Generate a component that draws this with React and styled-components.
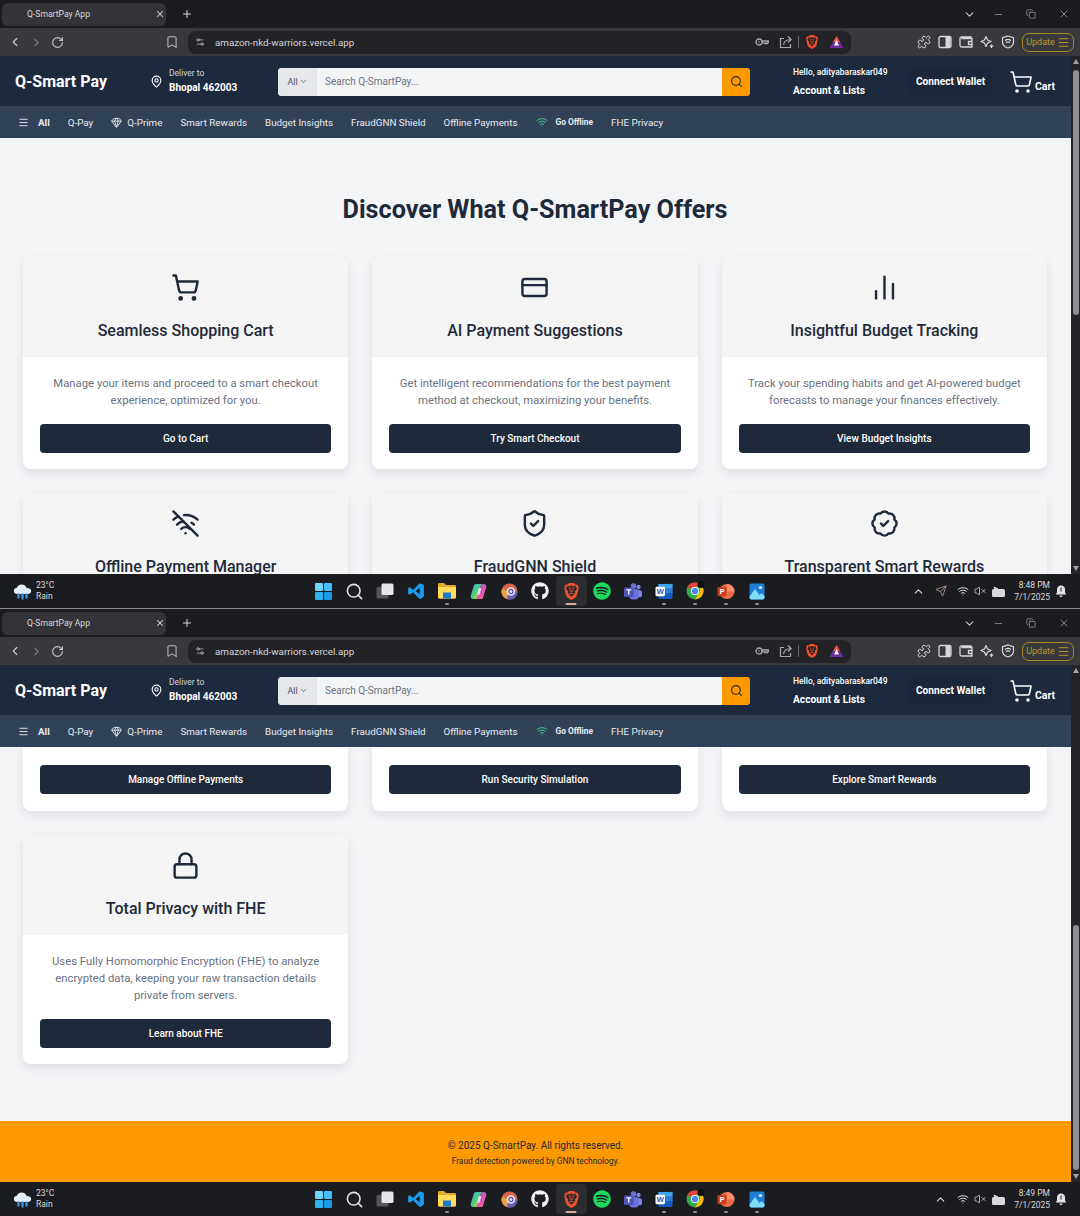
import React from 'react'
import styled, { createGlobalStyle } from 'styled-components'
import {
  BadgeCheck, Bookmark, ChartNoAxesColumn, ChevronDown, ChevronLeft, ChevronRight, ChevronUp,
  Copy, CreditCard, Gem, Lock, MapPin, Menu, Minus, Plus, Puzzle, RotateCw,
  Search, Send, Settings2, ShieldCheck, ShoppingCart, VolumeX,
  Wifi, WifiOff, X
} from 'lucide-react'
import { FaGithub, FaSpotify } from 'react-icons/fa'
import { SiBrave } from 'react-icons/si'

const GlobalStyle = createGlobalStyle`
  html, body { margin: 0; padding: 0; background: #1b1c1f; }
  body { font-family: Roboto, "Liberation Sans", sans-serif; }
  * { box-sizing: border-box; }
`

const Screen = styled.div`
  width: 1080px;
  height: 1216px;
  overflow: hidden;
`

const Window = styled.section`
  height: ${p => p.$height}px;
  display: flex;
  flex-direction: column;
`

/* browser chrome */
const TabStrip = styled.div`
  height: 28px;
  flex: none;
  display: flex;
  align-items: center;
  background: #1b1b20;
  color: #d8d8da;
  padding: 0 5px 0 2px;
`

const Tab = styled.div`
  width: 164px;
  height: 23px;
  background: #343438;
  border-radius: 6px;
  display: flex;
  align-items: center;
  justify-content: space-between;
  padding: 0 1px 0 25px;
  font-size: 8.6px;
  color: #d9d9dc;
`

const TabClose = styled.span`
  display: flex;
  width: 10px;
`

const NewTab = styled.span`
  display: flex;
  margin-left: 15px;
`

const WindowControls = styled.div`
  margin-left: auto;
  display: flex;
  align-items: center;
  gap: 22px;
  padding-right: 5px;
  color: #c9c9cc;
  & > :first-child { margin-right: -5px; }
`

const Toolbar = styled.div`
  height: 28px;
  flex: none;
  display: flex;
  align-items: center;
  background: #39393d;
  color: #c9c9cc;
  padding: 0 6px 0 8px;
`

const NavButtons = styled.div`
  width: 157px;
  display: flex;
  align-items: center;
  gap: 8px;
`

const Faded = styled.span`
  display: flex;
  opacity: 0.45;
`

const BookmarkSlot = styled.div`
  width: 23px;
  display: flex;
`

const UrlBar = styled.div`
  width: 663px;
  height: 23px;
  background: #232327;
  border-radius: 8px;
  display: flex;
  align-items: center;
  padding: 0 7px;
  font-size: 9.8px;
  color: #d5d5d8;
`

const UrlText = styled.span`
  margin-left: 10px;
`

const UrlActions = styled.div`
  margin-left: auto;
  display: flex;
  align-items: center;
  gap: 10px;
  color: #a9a9ad;
`

const Separator = styled.span`
  width: 1px;
  height: 12px;
  background: #67676b;
  margin: 0 -4px 0 -5px;
`

const ExtensionIcons = styled.div`
  margin-left: 66px;
  display: flex;
  align-items: center;
  gap: 7px;
  color: #d8d8da;
`

const UpdateButton = styled.div`
  width: 52px;
  height: 19px;
  margin-left: 7px;
  border: 1px solid #a8892a;
  border-radius: 7px;
  display: flex;
  align-items: center;
  justify-content: center;
  gap: 2px;
  font-size: 9px;
  color: #b8962a;
`

/* site */
const PageArea = styled.div`
  flex: 1;
  min-height: 0;
  display: flex;
`

const PageColumn = styled.div`
  flex: 1;
  min-width: 0;
  display: flex;
  flex-direction: column;
`

const Scrollbar = styled.div`
  width: 9px;
  flex: none;
  background: #242428;
  display: flex;
  flex-direction: column;
  align-items: center;
  padding: 3px 0;
`

const Arrow = styled.span`
  width: 0;
  height: 0;
  border-left: 3.5px solid transparent;
  border-right: 3.5px solid transparent;
  ${p => p.$down ? 'border-top: 5px solid #a3a3a6; margin-top: auto;' : 'border-bottom: 5px solid #a3a3a6;'}
`

const Thumb = styled.span`
  width: 6px;
  height: 245px;
  border-radius: 3px;
  background: #8e8e91;
  margin-top: ${p => p.$top}px;
`

const Header = styled.header`
  height: 50px;
  flex: none;
  display: flex;
  align-items: center;
  background: #1d293d;
  color: #fff;
  padding: 1px 0 0 15px;
`

const Logo = styled.div`
  width: 135px;
  flex: none;
  font-size: 16px;
  font-weight: 700;
`

const Deliver = styled.div`
  width: 128px;
  flex: none;
  display: flex;
  align-items: center;
  gap: 6px;
`

const SmallLabel = styled.div`
  font-size: 8.5px;
  line-height: 11px;
  color: #d1d5db;
`

const StrongLabel = styled.div`
  font-size: 10px;
  line-height: 15px;
  font-weight: 700;
  margin-top: 1px;
`

const SearchBox = styled.div`
  width: 472px;
  height: 28px;
  flex: none;
  display: flex;
  border-radius: 4px;
  overflow: hidden;
  background: #f3f4f6;
`

const SearchScope = styled.div`
  width: 39px;
  background: #e5e7eb;
  color: #4b5563;
  display: flex;
  align-items: center;
  justify-content: center;
  gap: 1px;
  font-size: 9px;
`

const SearchText = styled.div`
  flex: 1;
  display: flex;
  align-items: center;
  padding-left: 8px;
  font-size: 10px;
  color: #6b7280;
`

const SearchButton = styled.div`
  width: 28px;
  background: #ff9900;
  color: #1f2937;
  display: flex;
  align-items: center;
  justify-content: center;
`

const Account = styled.div`
  width: 122px;
  flex: none;
  margin-left: 43px;
`

const Hello = styled.div`
  font-size: 8.5px;
  line-height: 12px;
  font-weight: 500;
  margin-bottom: 6px;
`

const AccountLabel = styled.div`
  font-size: 10.2px;
  line-height: 13px;
  font-weight: 700;
`

const WalletButton = styled.div`
  width: 83px;
  flex: none;
  margin-left: -6px;
  height: 27px;
  border-radius: 4px;
  background: #1b2638;
  display: flex;
  align-items: center;
  justify-content: center;
  font-size: 10.2px;
  font-weight: 700;
`

const CartLink = styled.div`
  margin-left: 17px;
  display: flex;
  align-items: flex-end;
  gap: 2px;
  font-size: 10.5px;
  font-weight: 700;
  line-height: 14px;
`

const Nav = styled.nav`
  height: 32px;
  flex: none;
  display: flex;
  align-items: center;
  gap: 18px;
  background: #314158;
  color: #e8ebef;
  padding-left: 18px;
  font-size: 9.8px;
  white-space: nowrap;
`

const NavItem = styled.span`
  display: flex;
  align-items: center;
  gap: ${p => p.$gap || 0}px;
  font-weight: ${p => p.$bold ? 700 : 400};
  font-size: ${p => p.$small ? '8.4px' : 'inherit'};
`

const Viewport = styled.div`
  flex: 1;
  min-height: 0;
  overflow: hidden;
  background: #f3f4f6;
`

const Main = styled.main`
  padding: ${p => p.$top}px 24px 57px 23px;
`

const Title = styled.h1`
  margin: 0 0 29px;
  text-align: center;
  font-size: 25.2px;
  line-height: 36px;
  font-weight: 700;
  color: #1e2939;
`

const CardGrid = styled.div`
  display: grid;
  grid-template-columns: repeat(3, 1fr);
  gap: 24px;
`

const Card = styled.article`
  background: #fff;
  border-radius: ${p => p.$continued ? '0 0 8px 8px' : '8px'};
  overflow: hidden;
  box-shadow: 0 4px 10px rgba(30, 41, 59, 0.1);
  display: flex;
  flex-direction: column;
`

const CardHead = styled.div`
  height: 100px;
  flex: none;
  background: #f4f4f5;
  display: flex;
  flex-direction: column;
  align-items: center;
  padding-top: 16px;
  color: #1e2939;
`

const CardTitle = styled.h2`
  margin: 17px 0 0;
  font-size: 16px;
  line-height: 24px;
  font-weight: 500;
`

const CardBody = styled.div`
  flex: 1;
  display: flex;
  flex-direction: column;
  padding: 18px 17px 16px;
`

const CardTail = styled.div`
  display: flex;
  flex-direction: column;
  padding: 18px 17px 17px;
`

const CardText = styled.p`
  margin: 0 0 15px;
  flex: 1;
  text-align: center;
  font-size: 11.3px;
  line-height: 17px;
  color: #6a7282;
`

const CardButton = styled.button`
  height: 29px;
  border: 0;
  border-radius: 4px;
  background: #1e2939;
  color: #fff;
  font: 500 10px Roboto, sans-serif;
`

const Footer = styled.footer`
  height: 61px;
  background: #ff9900;
  color: #1e2939;
  text-align: center;
  padding-top: 17px;
`

const FooterLine = styled.div`
  font-size: 10px;
  line-height: 15px;
`

const FooterNote = styled.div`
  font-size: 8.4px;
  line-height: 13px;
  margin-top: 2px;
`

/* taskbar */
const Taskbar = styled.div`
  height: ${p => p.$divider ? 35 : 34}px;
  flex: none;
  display: grid;
  grid-template-columns: 1fr auto 1fr;
  align-items: center;
  background: #1b1c1f;
  border-bottom: ${p => p.$divider ? '1px solid #8b8b8e' : '0'};
  color: #e4e4e6;
`

const Weather = styled.div`
  display: flex;
  align-items: center;
  gap: 4px;
  padding-left: 13px;
`

const WeatherText = styled.div`
  font-size: 8.5px;
  line-height: 11px;
  color: #d8d8da;
`

const AppRow = styled.div`
  display: flex;
`

const AppSlot = styled.div`
  position: relative;
  width: 31px;
  height: 30px;
  display: flex;
  align-items: center;
  justify-content: center;
  border-radius: 4px;
  background: ${p => p.$active ? '#2b2c30' : 'transparent'};
  &::after {
    content: '';
    display: ${p => p.$running || p.$active ? 'block' : 'none'};
    position: absolute;
    bottom: 1px;
    left: 50%;
    transform: translateX(-50%);
    width: ${p => p.$active ? 11 : 4}px;
    height: 2px;
    border-radius: 1px;
    background: ${p => p.$active ? '#d9a9a0' : '#8f8f92'};
  }
`

const Tray = styled.div`
  display: flex;
  align-items: center;
  justify-content: flex-end;
  gap: 10px;
  padding-right: 13px;
  color: #d8d8da;
`

const SendIcon = styled.span`
  display: flex;
  color: #c7a79f;
`

const StatusIcons = styled.div`
  display: flex;
  align-items: center;
  gap: 5px;
`

const Clock = styled.div`
  width: 36px;
  margin: 0 -5px 0 -2px;
  text-align: right;
  font-size: 8.5px;
  line-height: 12px;
`

const features = [
  { icon: ShoppingCart, title: 'Seamless Shopping Cart', text: 'Manage your items and proceed to a smart checkout experience, optimized for you.', cta: 'Go to Cart' },
  { icon: CreditCard, title: 'AI Payment Suggestions', text: 'Get intelligent recommendations for the best payment method at checkout, maximizing your benefits.', cta: 'Try Smart Checkout' },
  { icon: ChartNoAxesColumn, title: 'Insightful Budget Tracking', text: 'Track your spending habits and get AI-powered budget forecasts to manage your finances effectively.', cta: 'View Budget Insights' }
]

const offlineRow = [
  { icon: WifiOff, title: 'Offline Payment Manager', cta: 'Manage Offline Payments' },
  { icon: ShieldCheck, title: 'FraudGNN Shield', cta: 'Run Security Simulation' },
  { icon: BadgeCheck, title: 'Transparent Smart Rewards', cta: 'Explore Smart Rewards' }
]

const privacy = { icon: Lock, title: 'Total Privacy with FHE', text: 'Uses Fully Homomorphic Encryption (FHE) to analyze encrypted data, keeping your raw transaction details private from servers.', cta: 'Learn about FHE' }

const navLinks = ['Smart Rewards', 'Budget Insights', 'FraudGNN Shield', 'Offline Payments']

const WindowsLogo = () => (
  <svg width="17" height="17" viewBox="0 0 18 18">
    <rect x="0" y="0" width="8.5" height="8.5" rx="1" fill="#6fd3fb" />
    <rect x="9.5" y="0" width="8.5" height="8.5" rx="1" fill="#45c0f7" />
    <rect x="0" y="9.5" width="8.5" height="8.5" rx="1" fill="#2fb2f2" />
    <rect x="9.5" y="9.5" width="8.5" height="8.5" rx="1" fill="#1a9be6" />
  </svg>
)

const TaskView = () => (
  <svg width="18" height="16" viewBox="0 0 18 16">
    <rect x="0.5" y="4" width="12" height="11.500" rx="1.500" fill="#55565a" />
    <rect x="5.500" y="0.500" width="12" height="11.500" rx="1.500" fill="#e6e6e8" />
  </svg>
)

const VsCode = () => (
  <svg width="18" height="18" viewBox="0 0 24 24">
    <path fillRule="evenodd" fill="#1b9cf0" d="M17 1.500 8 10.500 3.500 7 1.500 8v8l2 1L8 13.500l9 9 5.500-2.500V4zM17 7.500 11.500 12l5.500 4.500z" />
  </svg>
)

const Folder = () => (
  <svg width="18" height="16" viewBox="0 0 18 16">
    <path fill="#e3a928" d="M0 1.500C0 .7.700 0 1.500 0H6l2 2h8.500c.8 0 1.500.7 1.500 1.500V14c0 .8-.7 1.500-1.500 1.500h-15C.7 15.500 0 14.800 0 14z" />
    <path fill="#ffdb5c" d="M0 4h18v10c0 .8-.7 1.500-1.500 1.500h-15C.7 15.500 0 14.800 0 14z" />
    <rect x="5" y="9.500" width="8" height="6" fill="#1a78c9" />
  </svg>
)

const Copilot = () => (
  <svg width="17" height="17" viewBox="0 0 18 18">
    <defs>
      <linearGradient id="copilotA" x1="0" y1="0" x2="1" y2="1">
        <stop offset="0" stopColor="#38a8f4" />
        <stop offset="0.5" stopColor="#4fd07a" />
        <stop offset="1" stopColor="#f7c43c" />
      </linearGradient>
      <linearGradient id="copilotB" x1="0" y1="0" x2="1" y2="1">
        <stop offset="0" stopColor="#7b5cf0" />
        <stop offset="0.6" stopColor="#e957a8" />
        <stop offset="1" stopColor="#f5803c" />
      </linearGradient>
    </defs>
    <path fill="url(#copilotA)" d="M6 1h6L8 17H3.500C1.300 17 .3 15.300.9 13.300L4 3C4.300 1.800 5 1 6 1z" />
    <path fill="url(#copilotB)" d="M12 1h2.500c2.200 0 3.200 1.700 2.600 3.700L14 15c-.3 1.200-1 2-2 2H7z" />
    <path fill="#eef2ff" d="M9.500 5.500h2.500l-2 7H7.500z" opacity="0.85" />
  </svg>
)

const ChromeDev = () => (
  <svg width="17" height="17" viewBox="0 0 18 18">
    <circle cx="9" cy="9" r="8.500" fill="#d9674f" />
    <path fill="#5b5fb8" d="M9 9 17.500 9A8.500 8.500 0 0 1 6 17z" />
    <path fill="#e9a04a" d="M9 9 6 17A8.500 8.500 0 0 1 1 6z" />
    <circle cx="10.500" cy="9" r="4.500" fill="#e8e3f5" />
    <circle cx="10.500" cy="9" r="2.200" fill="none" stroke="#5a4a9a" strokeWidth="1.200" />
  </svg>
)

const Teams = () => (
  <svg width="18" height="17" viewBox="0 0 18 17">
    <circle cx="14.500" cy="4" r="2.200" fill="#7b83eb" />
    <circle cx="9.500" cy="3" r="2.800" fill="#6a72d8" />
    <rect x="11" y="7" width="7" height="7.500" rx="3" fill="#7b83eb" />
    <rect x="5.500" y="6" width="9" height="10.500" rx="3" fill="#6a72d8" />
    <rect x="0" y="4.500" width="9.500" height="9.500" rx="1.200" fill="#4b53bc" />
    <path d="M2.300 6.800h5M4.800 6.800v5" stroke="#fff" strokeWidth="1.300" fill="none" />
  </svg>
)

const Word = () => (
  <svg width="18" height="17" viewBox="0 0 18 18">
    <rect x="3" y="1" width="15" height="16" rx="1.500" fill="#185abd" />
    <rect x="3" y="1" width="15" height="5" fill="#41a5ee" />
    <rect x="3" y="6" width="15" height="5" fill="#2b7cd3" />
    <rect x="0" y="4" width="10" height="10" rx="1.200" fill="#fff" />
    <text x="5" y="12" textAnchor="middle" fontSize="8" fontWeight="700" fill="#185abd" fontFamily="Liberation Sans">W</text>
  </svg>
)

const Chrome = () => (
  <svg width="20" height="20" viewBox="0 0 20 20">
    <circle cx="10" cy="10" r="8.500" fill="#34a853" />
    <path fill="#ea4335" d="M10 1.500a8.500 8.500 0 0 1 7.400 4.300H10A4.300 4.300 0 0 0 6 8.500L2.600 5.800A8.500 8.500 0 0 1 10 1.500z" />
    <path fill="#fbbc05" d="M17.400 5.800A8.500 8.500 0 0 1 10 18.500l3.700-6.300a4.300 4.300 0 0 0 0-6.400z" />
    <circle cx="10" cy="10" r="4" fill="#fff" />
    <circle cx="10" cy="10" r="3.100" fill="#4285f4" />
    <circle cx="16" cy="3.500" r="3.500" fill="#0b0b0c" />
  </svg>
)

const PowerPoint = () => (
  <svg width="18" height="17" viewBox="0 0 18 18">
    <circle cx="10" cy="9" r="8" fill="#ed6c47" />
    <path fill="#ff8f6b" d="M10 1a8 8 0 0 1 8 8h-8z" />
    <rect x="0" y="4.500" width="9.500" height="9.500" rx="1.200" fill="#c43e1c" />
    <text x="4.800" y="12" textAnchor="middle" fontSize="7.500" fontWeight="700" fill="#fff" fontFamily="Liberation Sans">P</text>
  </svg>
)

const Photos = () => (
  <svg width="16" height="17" viewBox="0 0 16 17">
    <rect x="0.500" y="0.500" width="15" height="16" rx="2" fill="#1c7fd8" />
    <circle cx="11.500" cy="4.500" r="1.600" fill="#e9f4fd" />
    <path fill="#7fdcfb" d="M.5 13.500 6 6l4.500 6 2-2 3 3v1.500a2 2 0 0 1-2 2h-11a2 2 0 0 1-2-2z" />
  </svg>
)

const RainCloud = () => (
  <svg width="19" height="19" viewBox="0 0 19 19">
    <path fill="#e4eef8" d="M4.500 12C2.200 12 .8 10.600.8 8.900c0-1.700 1.300-3 3-3.100C4.400 3.700 6.300 2.400 8.600 2.400c2.500 0 4.500 1.600 5 3.700 2.500-.1 4.600 1.100 4.600 3 0 1.700-1.400 2.900-3.300 2.900z" />
    <path stroke="#3f8fe0" strokeWidth="2.400" strokeLinecap="round" d="M5.500 12.500v3M9.500 12.500v4M13.500 12.500v3" />
  </svg>
)

const BraveTriangle = () => (
  <svg width="15" height="14" viewBox="0 0 15 14">
    <path fill="#6e2a9e" d="M7.500 1 14.500 13H.5z" />
    <path fill="#f0563f" d="M7.500 1 11 7H4z" />
    <path fill="#fff" d="M7.500 5 10 10.500H5z" />
  </svg>
)

const KeyIcon = () => (
  <svg width="14" height="10" viewBox="0 0 14 10" fill="none" stroke="currentColor" strokeWidth="1.300">
    <circle cx="4" cy="5" r="3" />
    <circle cx="4" cy="5" r="0.800" fill="currentColor" stroke="none" />
    <path d="M7 4h6.300v1.500l-1.200 1.300-1.100-1-1 1-1-1H7" />
  </svg>
)

const ShareIcon = () => (
  <svg width="14" height="14" viewBox="0 0 14 14" fill="none" stroke="currentColor" strokeWidth="1.200">
    <path d="M5 3.500H1.500v9h10V9" />
    <path d="M4.500 10C5 6.500 7.500 4.500 12 4.500M9 1.500l3.200 3-3.200 3" />
  </svg>
)

const SidePanelIcon = () => (
  <svg width="14" height="14" viewBox="0 0 14 14">
    <rect x="1" y="1.500" width="12" height="11" rx="1.500" fill="none" stroke="currentColor" strokeWidth="1.300" />
    <rect x="7.500" y="2" width="5" height="10" fill="currentColor" />
  </svg>
)

const WalletIcon = () => (
  <svg width="14" height="14" viewBox="0 0 14 14" fill="none" stroke="currentColor" strokeWidth="1.300">
    <path d="M12 3.500V2H2.500A1.500 1.500 0 0 0 1 3.500v7A1.500 1.500 0 0 0 2.500 12H13V3.500H2.500" />
    <path d="M13 6.500H9.500v3H13" />
  </svg>
)

const AssistantIcon = () => (
  <svg width="14" height="14" viewBox="0 0 14 14" fill="none" stroke="currentColor" strokeWidth="1.200">
    <path d="M6 1.500 7.600 5l3.400 1.500-3.400 1.500L6 11.500 4.400 8 1 6.500 4.400 5z" strokeLinejoin="round" />
    <path d="M11.500 9.500v3.500M9.800 11.200h3.400" />
  </svg>
)

const VpnShield = () => (
  <svg width="14" height="14" viewBox="0 0 14 14" fill="none" stroke="currentColor" strokeWidth="1.200">
    <path d="M7 1 12.500 2.800V7c0 3-2.300 5-5.500 6C3.800 12 1.500 10 1.500 7V2.800z" />
    <path d="M4 5.500c1.800-1.300 4.200-1.300 6 0M5 7.500c1.200-.8 2.800-.8 4 0" />
  </svg>
)

const BatteryPlug = () => (
  <svg width="15" height="13" viewBox="0 0 15 13">
    <rect x="1" y="4" width="13" height="8" rx="1.500" fill="#d8d8da" />
    <path d="M3 4V1.500L7 3.500 7 4z" fill="#d8d8da" />
  </svg>
)

const NotifyBell = () => (
  <svg width="12" height="14" viewBox="0 0 12 14">
    <path fill="#e4e4e6" d="M6 1.500c-2.400 0-4 1.700-4 4v3L.7 10.500h10.600L10 8.500v-3c0-2.400-1.600-4-4-4z" />
    <path fill="#e4e4e6" d="M4.500 11.500h3a1.500 1.500 0 0 1-3 0z" />
    <rect x="5.500" y="3.500" width="1" height="4" fill="#1b1c1f" />
  </svg>
)

const apps = [
  { key: 'start', icon: <WindowsLogo /> },
  { key: 'search', icon: <Search size={19} strokeWidth={2} color="#e4e4e6" /> },
  { key: 'tasks', icon: <TaskView /> },
  { key: 'vscode', icon: <VsCode /> },
  { key: 'files', icon: <Folder />, running: true },
  { key: 'copilot', icon: <Copilot /> },
  { key: 'dev', icon: <ChromeDev /> },
  { key: 'github', icon: <FaGithub size={18} color="#f2f2f2" /> },
  { key: 'brave', icon: <SiBrave size={17} color="#f1502b" />, active: true },
  { key: 'spotify', icon: <FaSpotify size={18} color="#1ed760" /> },
  { key: 'teams', icon: <Teams /> },
  { key: 'word', icon: <Word />, running: true },
  { key: 'chrome', icon: <Chrome />, running: true },
  { key: 'ppt', icon: <PowerPoint />, running: true },
  { key: 'photos', icon: <Photos />, running: true }
]

const FeatureHead = ({ feature }) => {
  const Icon = feature.icon
  return (
    <CardHead>
      <Icon size={29} strokeWidth={2} />
      <CardTitle>{feature.title}</CardTitle>
    </CardHead>
  )
}

const FeatureCard = ({ feature }) => (
  <Card>
    <FeatureHead feature={feature} />
    <CardBody>
      <CardText>{feature.text}</CardText>
      <CardButton>{feature.cta}</CardButton>
    </CardBody>
  </Card>
)

// what the page shows scrolled to the top
const TopOfPage = () => (
  <Viewport>
    <Main $top={54}>
      <Title>Discover What Q-SmartPay Offers</Title>
      <CardGrid>
        {features.map(f => <FeatureCard key={f.title} feature={f} />)}
        {offlineRow.map(f => <Card key={f.title}><FeatureHead feature={f} /></Card>)}
      </CardGrid>
    </Main>
  </Viewport>
)

// what the page shows scrolled to the bottom
const BottomOfPage = () => (
  <Viewport>
    <Main $top={0}>
      <CardGrid>
        {offlineRow.map(f => (
          <Card key={f.title} $continued>
            <CardTail><CardButton>{f.cta}</CardButton></CardTail>
          </Card>
        ))}
        <FeatureCard feature={privacy} />
      </CardGrid>
    </Main>
    <Footer>
      <FooterLine>© 2025 Q-SmartPay. All rights reserved.</FooterLine>
      <FooterNote>Fraud detection powered by GNN technology.</FooterNote>
    </Footer>
  </Viewport>
)

const BrowserWindow = ({ height, thumbTop, time, showSend, divider, children }) => (
  <Window $height={height}>
    <TabStrip>
      <Tab>
        Q-SmartPay App
        <TabClose><X size={10} strokeWidth={2.5} /></TabClose>
      </Tab>
      <NewTab><Plus size={12} strokeWidth={2} /></NewTab>
      <WindowControls>
        <ChevronDown size={13} />
        <Minus size={11} strokeWidth={1.2} />
        <Copy size={10} strokeWidth={1.3} />
        <X size={12} strokeWidth={1.2} />
      </WindowControls>
    </TabStrip>
    <Toolbar>
      <NavButtons>
        <ChevronLeft size={14} strokeWidth={2} />
        <Faded><ChevronRight size={13} strokeWidth={2} /></Faded>
        <RotateCw size={13} strokeWidth={2} />
      </NavButtons>
      <BookmarkSlot><Bookmark size={14} strokeWidth={1.6} /></BookmarkSlot>
      <UrlBar>
        <Settings2 size={10} strokeWidth={1.6} />
        <UrlText>amazon-nkd-warriors.vercel.app</UrlText>
        <UrlActions>
          <KeyIcon />
          <ShareIcon />
          <Separator />
          <SiBrave size={14} color="#f1502b" />
          <BraveTriangle />
        </UrlActions>
      </UrlBar>
      <ExtensionIcons>
        <Puzzle size={14} strokeWidth={1.7} />
        <SidePanelIcon />
        <WalletIcon />
        <AssistantIcon />
        <VpnShield />
      </ExtensionIcons>
      <UpdateButton>
        Update
        <Menu size={13} strokeWidth={1.8} />
      </UpdateButton>
    </Toolbar>
    <PageArea>
      <PageColumn>
        <Header>
          <Logo>Q-Smart Pay</Logo>
          <Deliver>
            <MapPin size={13} strokeWidth={2} />
            <div>
              <SmallLabel>Deliver to</SmallLabel>
              <StrongLabel>Bhopal 462003</StrongLabel>
            </div>
          </Deliver>
          <SearchBox>
            <SearchScope>All<ChevronDown size={9} /></SearchScope>
            <SearchText>Search Q-SmartPay...</SearchText>
            <SearchButton><Search size={13} strokeWidth={2} /></SearchButton>
          </SearchBox>
          <Account>
            <Hello>Hello, adityabaraskar049</Hello>
            <AccountLabel>Account &amp; Lists</AccountLabel>
          </Account>
          <WalletButton>Connect Wallet</WalletButton>
          <CartLink>
            <ShoppingCart size={24} strokeWidth={1.6} />
            Cart
          </CartLink>
        </Header>
        <Nav>
          <NavItem $gap={9} $bold><Menu size={11} strokeWidth={2} />All</NavItem>
          <NavItem>Q-Pay</NavItem>
          <NavItem $gap={5}><Gem size={11} strokeWidth={2} />Q-Prime</NavItem>
          {navLinks.map(l => <NavItem key={l}>{l}</NavItem>)}
          <NavItem $gap={8} $bold $small><Wifi size={12} strokeWidth={2} color="#3fc380" />Go Offline</NavItem>
          <NavItem>FHE Privacy</NavItem>
        </Nav>
        {children}
      </PageColumn>
      <Scrollbar>
        <Arrow />
        <Thumb $top={thumbTop} />
        <Arrow $down />
      </Scrollbar>
    </PageArea>
    <Taskbar $divider={divider}>
      <Weather>
        <RainCloud />
        <WeatherText>23°C<br />Rain</WeatherText>
      </Weather>
      <AppRow>
        {apps.map(a => <AppSlot key={a.key} $running={a.running} $active={a.active}>{a.icon}</AppSlot>)}
      </AppRow>
      <Tray>
        <ChevronUp size={13} strokeWidth={2} />
        {showSend && <SendIcon><Send size={12} strokeWidth={1.5} /></SendIcon>}
        <StatusIcons>
          <Wifi size={12} strokeWidth={2} />
          <VolumeX size={12} strokeWidth={1.6} />
          <BatteryPlug />
        </StatusIcons>
        <Clock>{time}<br />7/1/2025</Clock>
        <NotifyBell />
      </Tray>
    </Taskbar>
  </Window>
)

export default function App() {
  return (
    <Screen>
      <GlobalStyle />
      <BrowserWindow height={609} thumbTop={6} time="8:48 PM" showSend divider>
        <TopOfPage />
      </BrowserWindow>
      <BrowserWindow height={607} thumbTop={252} time="8:49 PM">
        <BottomOfPage />
      </BrowserWindow>
    </Screen>
  )
}
